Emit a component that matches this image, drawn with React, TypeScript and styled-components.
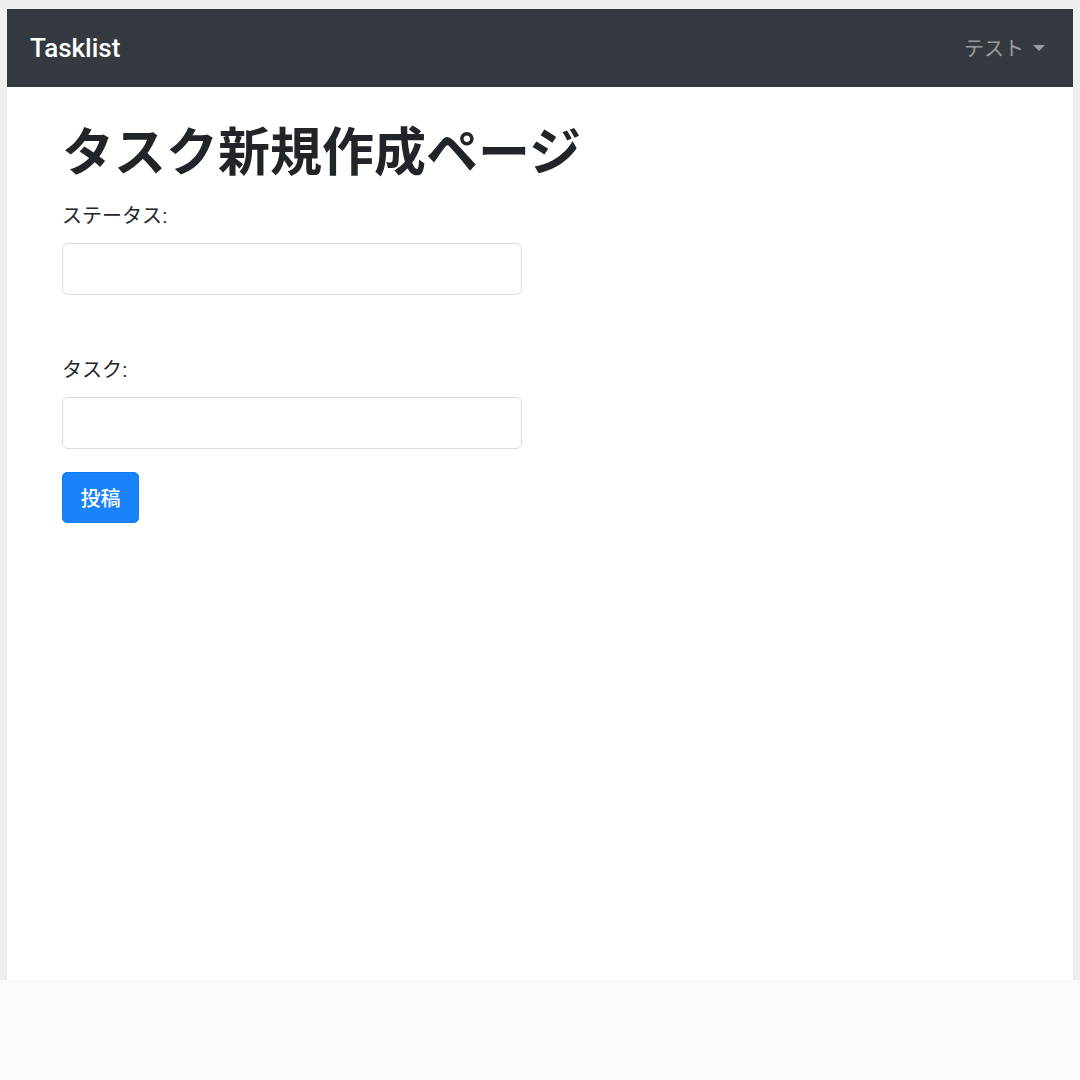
import React from "react";
import styled, { createGlobalStyle } from "styled-components";

const GlobalStyle = createGlobalStyle`
  html, body {
    margin: 0;
    padding: 0;
    background: #fafafa;
  }
  * {
    box-sizing: border-box;
  }
`;

const JP = `"Liberation Sans", "Noto Sans CJK JP", sans-serif`;

const App = () => {
  return (
    <>
      <GlobalStyle />
      <Frame>
        <Window>
          <NavBar>
            <Brand>Tasklist</Brand>
            <UserMenu>
              テスト
              <Caret />
            </UserMenu>
          </NavBar>
          <Content>
            <Title>タスク新規作成ページ</Title>
            <Form onSubmit={(e) => e.preventDefault()}>
              <FieldGroup>
                <Label htmlFor="status">ステータス:</Label>
                <Input id="status" type="text" />
              </FieldGroup>
              <FieldGroup $spaced>
                <Label htmlFor="content">タスク:</Label>
                <Input id="content" type="text" />
              </FieldGroup>
              <SubmitButton type="submit">投稿</SubmitButton>
            </Form>
          </Content>
        </Window>
      </Frame>
    </>
  );
};

export default App;

const Frame = styled.div`
  height: 980px;
  padding: 9px 7px 0;
  background: #efefef;
`;

const Window = styled.div`
  height: 100%;
  background: #ffffff;
  display: flex;
  flex-direction: column;
`;

const NavBar = styled.nav`
  height: 78px;
  flex-shrink: 0;
  background: #343a40;
  display: flex;
  align-items: center;
  justify-content: space-between;
  padding: 0 28px 0 23px;
`;

const Brand = styled.a`
  font-family: "Roboto", "Liberation Sans", sans-serif;
  font-size: 26px;
  font-weight: 500;
  color: #ffffff;
  line-height: 1;
`;

const UserMenu = styled.a`
  font-family: ${JP};
  font-size: 20px;
  color: rgba(255, 255, 255, 0.5);
  display: flex;
  align-items: center;
  gap: 9px;
  margin-top: -1px;
`;

const Caret = styled.span`
  width: 0;
  height: 0;
  border-top: 6px solid rgba(255, 255, 255, 0.5);
  border-left: 6px solid transparent;
  border-right: 6px solid transparent;
  margin-top: 1px;
`;

const Content = styled.main`
  padding: 35px 55px 0;
`;

const Title = styled.h1`
  font-family: ${JP};
  font-size: 52px;
  font-weight: 700;
  line-height: 1.2;
  color: #212529;
  margin: 0 0 17px;
`;

const Form = styled.form`
  display: flex;
  flex-direction: column;
  align-items: flex-start;
`;

const FieldGroup = styled.div<{ $spaced?: boolean }>`
  display: flex;
  flex-direction: column;
  margin-top: ${({ $spaced }) => ($spaced ? "60px" : "0")};
`;

const Label = styled.label`
  font-family: ${JP};
  font-size: 20px;
  line-height: 30px;
  color: #212529;
  margin-bottom: 12px;
`;

const Input = styled.input`
  width: 460px;
  height: 52px;
  border: 1.5px solid #dadde1;
  border-radius: 6px;
  background: #ffffff;
  font-size: 20px;
  padding: 0 16px;
  outline: none;
`;

const SubmitButton = styled.button`
  margin-top: 23px;
  width: 77px;
  height: 51px;
  border: 1px solid #0d7cf5;
  border-radius: 5px;
  background: #1a82fb;
  color: #ffffff;
  font-family: ${JP};
  font-size: 20px;
  font-weight: 500;
  cursor: pointer;
  padding: 0;
`;
